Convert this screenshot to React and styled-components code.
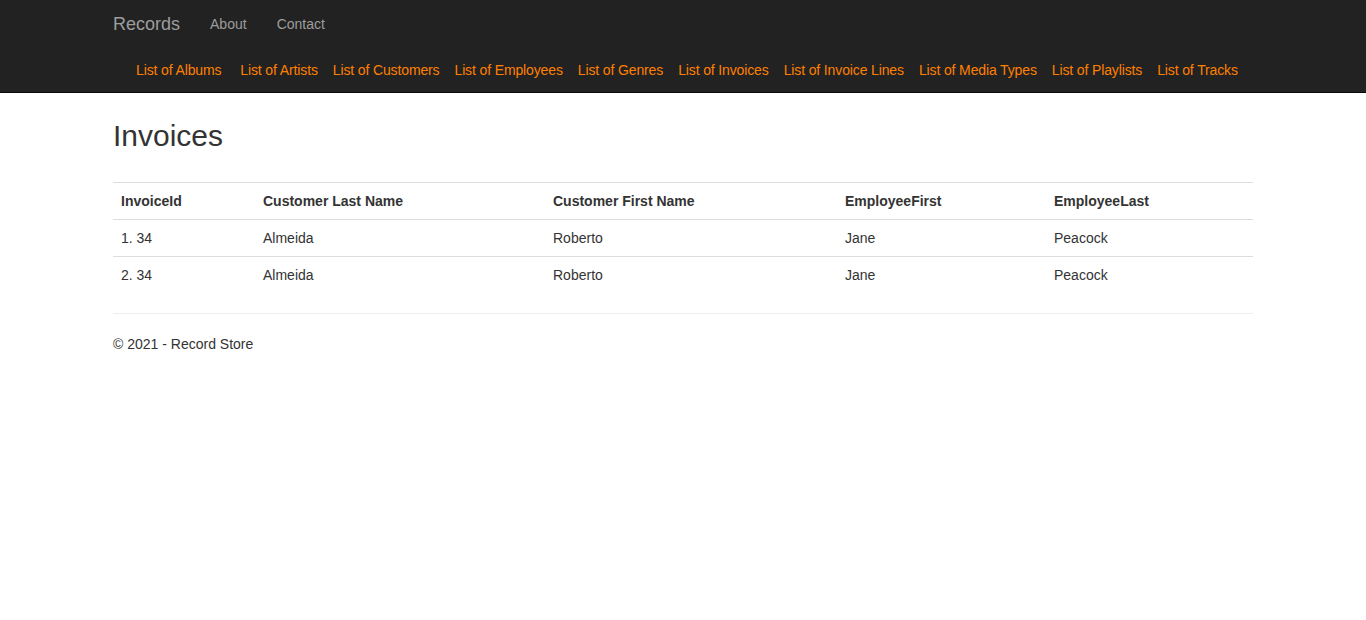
import styled, { createGlobalStyle } from 'styled-components';

const GlobalStyle = createGlobalStyle`
  * { box-sizing: border-box; }
  body {
    margin: 0;
    font-family: "Liberation Sans", Arial, Helvetica, sans-serif;
    font-size: 14px;
    line-height: 20px;
    color: #333333;
    background: #ffffff;
  }
`;

const columns = [
  { key: 'id', label: 'InvoiceId', width: 142 },
  { key: 'last', label: 'Customer Last Name', width: 290 },
  { key: 'first', label: 'Customer First Name', width: 292 },
  { key: 'empFirst', label: 'EmployeeFirst', width: 209 },
  { key: 'empLast', label: 'EmployeeLast', width: 207 },
];

const rows = [
  { id: '1. 34', last: 'Almeida', first: 'Roberto', empFirst: 'Jane', empLast: 'Peacock' },
  { id: '2. 34', last: 'Almeida', first: 'Roberto', empFirst: 'Jane', empLast: 'Peacock' },
];

const lists = [
  'Albums', 'Artists', 'Customers', 'Employees', 'Genres',
  'Invoices', 'Invoice Lines', 'Media Types', 'Playlists', 'Tracks',
];

const Navbar = styled.header`
  background: #222222;
  border-bottom: 1px solid #080808;
`;

const Container = styled.div`
  width: 1170px;
  margin: 0 auto;
  padding: 0 15px;
`;

const TopRow = styled.div`
  display: flex;
  align-items: flex-start;
  height: 50px;
`;

const Brand = styled.a`
  font-size: 18px;
  line-height: 20px;
  padding: 14px 15px 16px 0;
  color: #9d9d9d;
  text-decoration: none;
`;

const NavLink = styled.a`
  padding: 14px 15px 16px;
  line-height: 20px;
  color: #9d9d9d;
  text-decoration: none;
`;

const ListRow = styled.ul`
  display: flex;
  align-items: center;
  gap: 15px;
  height: 42px;
  margin: 0;
  padding: 0 0 2px 23px;
  list-style: none;
`;

const ListItem = styled.li`
  &:first-child { margin-right: 4px; }
`;

const OrangeLink = styled.a`
  color: #ff8000;
  text-decoration: none;
  white-space: nowrap;
  letter-spacing: -0.13px;
`;

const Title = styled.h2`
  font-size: 30px;
  font-weight: 500;
  line-height: 33px;
  margin: 26px 0 30px;
`;

const Table = styled.table`
  width: 100%;
  border-collapse: collapse;
  margin-bottom: 20px;
  table-layout: fixed;
`;

const Th = styled.th`
  text-align: left;
  font-weight: bold;
  padding: 8px;
  line-height: 20px;
  border-top: 1px solid #dddddd;
  border-bottom: 1px solid #dddddd;
`;

const Td = styled.td`
  padding: 8px;
  line-height: 20px;
  border-top: 1px solid #dddddd;
`;

const Rule = styled.hr`
  margin: 20px 0;
  border: 0;
  border-top: 1px solid #eeeeee;
`;

const Footer = styled.footer`
  line-height: 20px;
`;

export default function App() {
  return (
    <>
      <GlobalStyle />
      <Navbar>
        <Container>
          <TopRow>
            <Brand href="#">Records</Brand>
            <NavLink href="#">About</NavLink>
            <NavLink href="#">Contact</NavLink>
          </TopRow>
          <ListRow>
            {lists.map((name) => (
              <ListItem key={name}>
                <OrangeLink href="#">List of {name}</OrangeLink>
              </ListItem>
            ))}
          </ListRow>
        </Container>
      </Navbar>
      <Container>
        <Title>Invoices</Title>
        <Table>
          <colgroup>
            {columns.map((c) => (
              <col key={c.key} style={{ width: c.width }} />
            ))}
          </colgroup>
          <thead>
            <tr>
              {columns.map((c) => (
                <Th key={c.key}>{c.label}</Th>
              ))}
            </tr>
          </thead>
          <tbody>
            {rows.map((r, i) => (
              <tr key={i}>
                {columns.map((c) => (
                  <Td key={c.key}>{r[c.key]}</Td>
                ))}
              </tr>
            ))}
          </tbody>
        </Table>
        <Rule />
        <Footer>© 2021 - Record Store</Footer>
      </Container>
    </>
  );
}
